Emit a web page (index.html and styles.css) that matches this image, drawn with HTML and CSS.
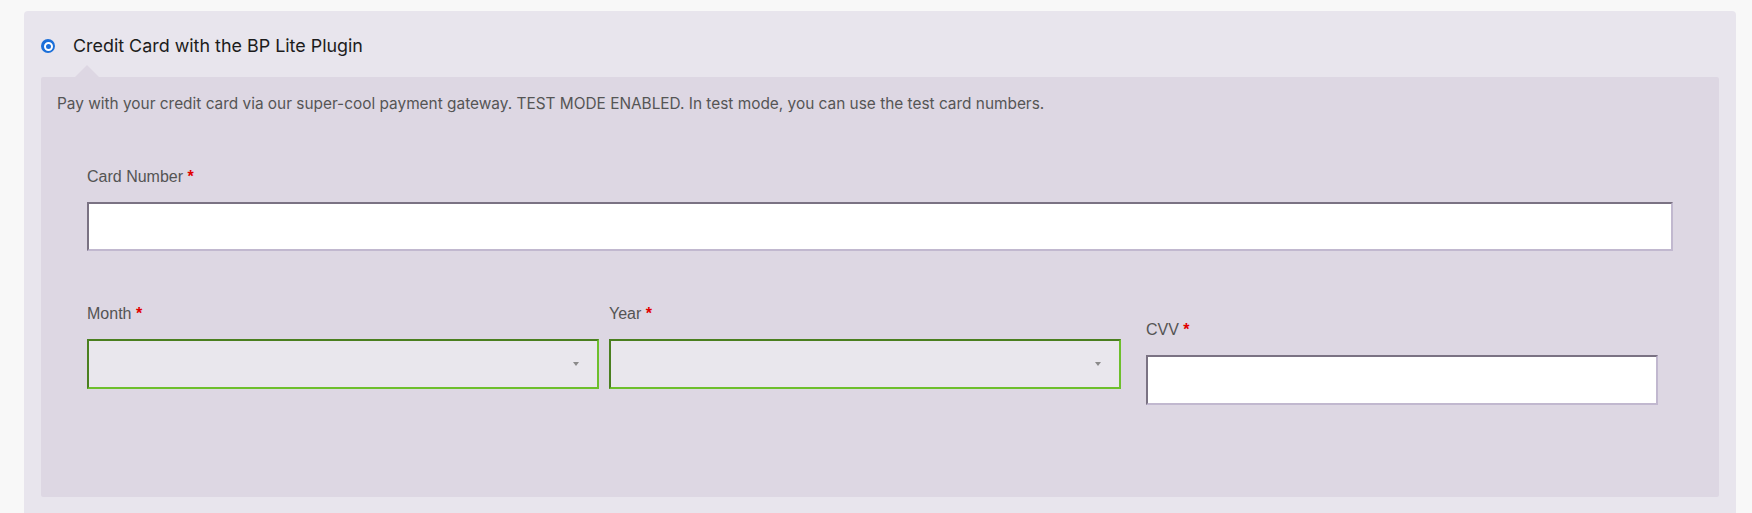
FILE: index.html
```html
<!DOCTYPE html>
<html lang="en">
<head>
<meta charset="utf-8">
<title>Payment</title>
<link rel="stylesheet" href="styles.css">
</head>
<body>
  <div class="payment-box">
    <div class="method-head">
      <span class="radio"><span class="radio-dot"></span></span>
      <label class="method-title">Credit Card with the BP Lite Plugin</label>
    </div>
    <div class="method-body">
      <p class="method-desc">Pay with your credit card via our super-cool payment gateway. TEST MODE ENABLED. In test mode, you can use the test card numbers.</p>
      <div class="fields">
        <div class="field">
          <div class="field-label">Card Number <span class="req">*</span></div>
          <div class="text-input card-input"></div>
        </div>
        <div class="field-row">
          <div class="field col">
            <div class="field-label">Month <span class="req">*</span></div>
            <div class="select-input"></div>
          </div>
          <div class="field col col-year">
            <div class="field-label">Year <span class="req">*</span></div>
            <div class="select-input"></div>
          </div>
          <div class="field col col-cvv">
            <div class="field-label">CVV <span class="req">*</span></div>
            <div class="text-input cvv-input"></div>
          </div>
        </div>
      </div>
    </div>
  </div>
</body>
</html>
```
FILE: styles.css
```css
html, body {
  margin: 0;
  padding: 0;
}

body {
  background: #f8f8f8;
  padding: 11px 16px 0 24px;
  height: 513px;
  box-sizing: border-box;
  overflow: hidden;
  font-family: Inter, "Liberation Sans", sans-serif;
}

.payment-box {
  background: #e8e5ed;
  border-radius: 4px 4px 0 0;
  padding: 0 17px 30px;
}

.method-head {
  display: flex;
  align-items: center;
  padding: 25px 0 21px 0;
  height: 20px;
}

.radio {
  width: 14px;
  height: 14px;
  box-sizing: border-box;
  border-radius: 50%;
  background: #1b6fd9;
  display: flex;
  align-items: center;
  justify-content: center;
}

.radio-dot {
  width: 9px;
  height: 9px;
  box-sizing: border-box;
  border-radius: 50%;
  background: #1b6fd9;
  border: 2px solid #ffffff;
}

.method-title {
  margin-left: 18px;
  font-size: 17.9px;
  line-height: 20px;
  color: #1c1c1c;
}

.method-body {
  position: relative;
  background: #ddd7e3;
  border-radius: 2px;
  padding: 17px 16px 92px;
}

.method-body::before {
  content: "";
  position: absolute;
  top: -12px;
  left: 34px;
  border-left: 12px solid transparent;
  border-right: 12px solid transparent;
  border-bottom: 12px solid #ddd7e3;
}

.method-desc {
  margin: 0;
  font-size: 15.4px;
  line-height: 20px;
  color: #555555;
}

.fields {
  padding: 53px 30px 0;
}

.field-label {
  font-family: "Liberation Sans", Arial, sans-serif;
  font-size: 16px;
  line-height: 20px;
  color: #545454;
}

.req {
  color: #e10000;
  font-weight: bold;
}

.text-input {
  margin-top: 15px;
  background: #ffffff;
  border-style: solid;
  border-width: 2px;
  border-color: #7a7283 #c1b8cf #c1b8cf #7a7283;
  box-sizing: border-box;
}

.card-input {
  height: 49px;
}

.field-row {
  display: flex;
  align-items: flex-start;
  margin-top: 53px;
}

.col {
  width: 512px;
  flex: none;
}

.col-year {
  margin-left: 10px;
}

.col-cvv {
  margin-left: 25px;
  margin-top: 16px;
}

.cvv-input {
  margin-top: 15px;
  height: 50px;
}

.select-input {
  position: relative;
  margin-top: 15px;
  height: 50px;
  box-sizing: border-box;
  background: #e9e7ed;
  border-style: solid;
  border-width: 2px;
  border-color: #4a7f1f #6dbf2c #6dbf2c #4a7f1f;
}

.select-input::after {
  content: "";
  position: absolute;
  right: 18px;
  top: 21px;
  border-left: 3px solid transparent;
  border-right: 3px solid transparent;
  border-top: 4px solid #8a8a8a;
}
```
